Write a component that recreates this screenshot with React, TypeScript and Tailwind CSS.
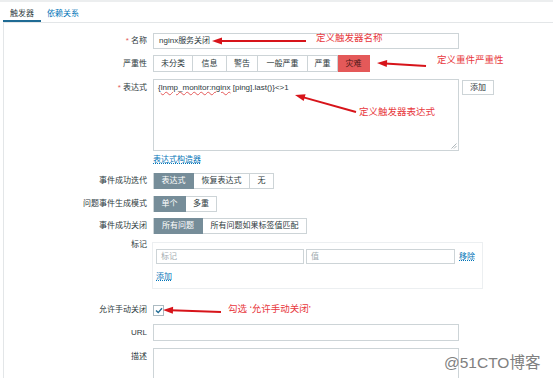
import React from 'react';

const font = "font-['Liberation_Sans','Noto_Sans_CJK_SC',sans-serif]";

function Arrow({x1, y1, x2, y2}: {x1: number; y1: number; x2: number; y2: number}) {
  // tail (x1,y1) -> tip (x2,y2)
  const dx = x2 - x1;
  const dy = y2 - y1;
  const len = Math.hypot(dx, dy);
  const ux = dx / len;
  const uy = dy / len;
  const hl = 10;
  const hw = 3.5;
  const bx = x2 - ux * hl;
  const by = y2 - uy * hl;
  const pts = `${x2},${y2} ${bx - uy * hw},${by + ux * hw} ${bx + uy * hw},${by - ux * hw}`;
  return (
    <g>
      <line x1={x1} y1={y1} x2={bx + ux * 2} y2={by + uy * 2} stroke="#d7141a" strokeWidth={2} />
      <polygon points={pts} fill="#d7141a" />
    </g>
  );
}

function SegGroup({items}: {items: {label: string; w: number; on?: boolean; red?: boolean}[]}) {
  return (
    <div className="flex h-full border-l border-[#cdd4d7]">
      {items.map((it) => (
        <div
          key={it.label}
          style={{width: it.w}}
          className={
            'flex h-full items-center justify-center border-y border-r ' +
            (it.red
              ? 'border-[#e45959] bg-[#e45959] text-[#4a1717]'
              : it.on
                ? 'border-[#768d99] bg-[#768d99] text-white'
                : 'border-[#cdd4d7] bg-white text-[#2e3a40]')
          }
        >
          {it.label}
        </div>
      ))}
    </div>
  );
}

export default function App() {
  const label = 'w-[143px] shrink-0 text-right text-[#2e3a40]';
  return (
    <div className={`relative h-[378px] w-[553px] overflow-hidden bg-white text-[8px] ${font}`}>
      <div className="h-[2px] bg-[#eceeef]" />
      <div className="pl-[3px]">
        {/* tabs */}
        <div className="flex h-[21px] items-end border-b border-[#e3e6e8]">
          <div className="flex h-full flex-col justify-between px-[7px] pt-[7px] text-[#2e3a40]">
            <span className="leading-[10px]">触发器</span>
            <div className="-mx-[7px] h-[2px] bg-[#1f6b94]" />
          </div>
          <div className="ml-[6px] flex h-full pt-[7px] text-[#0275b8]">
            <span className="leading-[10px]">依赖关系</span>
          </div>
        </div>

        {/* body */}
        <div className="h-[360px] border-l border-[#e3e6e8] pt-[10px]">
          {/* 名称 */}
          <div className="flex h-[16px] leading-[16px]">
            <div className={label}>
              <span className="text-[#e45959]">*</span> 名称
            </div>
            <div className="ml-[6px] h-full w-[306px] border border-[#cdd4d7] px-[5px] leading-[14px] text-[#2e3a40]">
              nginx服务关闭
            </div>
          </div>

          {/* 严重性 */}
          <div className="mt-[6px] flex h-[17px] leading-[17px]">
            <div className={label}>严重性</div>
            <div className="ml-[6px] h-full">
              <SegGroup
                items={[
                  {label: '未分类', w: 39},
                  {label: '信息', w: 34},
                  {label: '警告', w: 31},
                  {label: '一般严重', w: 50},
                  {label: '严重', w: 30},
                  {label: '灾难', w: 32, red: true},
                ]}
              />
            </div>
          </div>

          {/* 表达式 */}
          <div className="mt-[7px] flex">
            <div className={label + ' pt-[1px] leading-[16px]'}>
              <span className="text-[#e45959]">*</span> 表达式
            </div>
            <div className="relative ml-[6px] h-[72px] w-[306px] border border-[#cdd4d7] px-[4px] pt-[2px] leading-[12px] text-[#2e3a40]">
              {'{'}
              <span className="underline decoration-[#e45959] decoration-wavy decoration-[0.5px]">lnmp_monitor:nginx</span>
              {' [ping].last()}<>1'}
              <svg className="absolute right-[1px] bottom-[1px]" width="6" height="6" viewBox="0 0 6 6">
                <line x1="0.5" y1="5.5" x2="5.5" y2="0.5" stroke="#9aa5aa" strokeWidth="0.8" />
                <line x1="3" y1="5.5" x2="5.5" y2="3" stroke="#9aa5aa" strokeWidth="0.8" />
              </svg>
            </div>
            <div className="ml-[3px] mt-[1px] flex h-[15px] w-[32px] items-center justify-center border border-[#cdd4d7] text-[#2e3a40]">
              添加
            </div>
          </div>

          {/* 表达式构造器 */}
          <div className="mt-[3px] pl-[149px] leading-[12px]">
            <span className="text-[#0275b8] underline decoration-dotted">表达式构造器</span>
          </div>

          {/* 事件成功迭代 */}
          <div className="mt-[7px] flex h-[16px] leading-[16px]">
            <div className={label}>事件成功迭代</div>
            <div className="ml-[6px] h-full">
              <SegGroup
                items={[
                  {label: '表达式', w: 40, on: true},
                  {label: '恢复表达式', w: 56},
                  {label: '无', w: 24},
                ]}
              />
            </div>
          </div>

          {/* 问题事件生成模式 */}
          <div className="mt-[7px] flex h-[16px] leading-[16px]">
            <div className={label}>问题事件生成模式</div>
            <div className="ml-[6px] h-full">
              <SegGroup
                items={[
                  {label: '单个', w: 32, on: true},
                  {label: '多重', w: 31},
                ]}
              />
            </div>
          </div>

          {/* 事件成功关闭 */}
          <div className="mt-[6px] flex h-[16px] leading-[16px]">
            <div className={label}>事件成功关闭</div>
            <div className="ml-[6px] h-full">
              <SegGroup
                items={[
                  {label: '所有问题', w: 49, on: true},
                  {label: '所有问题如果标签值匹配', w: 104},
                ]}
              />
            </div>
          </div>

          {/* 标记 */}
          <div className="mt-[8px] flex">
            <div className={label + ' -mt-[2px] leading-[10px]'}>标记</div>
            <div className="ml-[5px] w-[331px] border border-[#eceff1] px-[3px] pt-[6px] pb-[5px]">
              <div className="flex h-[15px] items-center">
                <div className="h-full w-[148px] border border-[#cdd4d7] px-[4px] leading-[13px] text-[#a3acb0]">标记</div>
                <div className="ml-[2px] h-full w-[149px] border border-[#cdd4d7] px-[4px] leading-[13px] text-[#a3acb0]">值</div>
                <span className="ml-[4px] text-[#0275b8] underline decoration-dotted">移除</span>
              </div>
              <div className="mt-[7px] leading-[12px]">
                <span className="text-[#0275b8] underline decoration-dotted">添加</span>
              </div>
            </div>
          </div>

          {/* 允许手动关闭 */}
          <div className="mt-[15px] flex h-[12px] items-center leading-[12px]">
            <div className={label}>允许手动关闭</div>
            <div className="ml-[6px] flex h-[11px] w-[11px] items-center justify-center border border-[#acbbc2] bg-white">
              <svg width="8" height="7" viewBox="0 0 8 7">
                <path d="M1 3.5 L3.2 5.6 L7 1.2" fill="none" stroke="#1f6b94" strokeWidth="1.4" />
              </svg>
            </div>
          </div>

          {/* URL */}
          <div className="mt-[8px] flex h-[17px] leading-[17px]">
            <div className={label}>URL</div>
            <div className="ml-[6px] h-full w-[306px] border border-[#cdd4d7]" />
          </div>

          {/* 描述 */}
          <div className="mt-[7px] flex">
            <div className={label + ' pt-[1px] leading-[16px]'}>描述</div>
            <div className="ml-[6px] h-[40px] w-[306px] border border-[#cdd4d7]" />
          </div>
        </div>
      </div>

      {/* annotations */}
      <svg className="pointer-events-none absolute inset-0" width="553" height="378">
        <Arrow x1={306} y1={41} x2={212} y2={41} />
        <Arrow x1={426} y1={66} x2={377} y2={63} />
        <Arrow x1={356} y1={112} x2={295} y2={95} />
        <Arrow x1={221} y1={312} x2={163} y2={310} />
      </svg>
      <div className="absolute left-[316px] top-[32px] text-[9.5px] leading-[12px] text-[#e8383d]">定义触发器名称</div>
      <div className="absolute left-[437px] top-[54px] text-[9.5px] leading-[12px] text-[#e8383d]">定义重件严重性</div>
      <div className="absolute left-[359px] top-[106px] text-[9.5px] leading-[12px] text-[#e8383d]">定义触发器表达式</div>
      <div className="absolute left-[228px] top-[303px] text-[9.5px] leading-[12px] text-[#e8383d]">勾选 ‘允许手动关闭’</div>
      <div className="absolute left-[444px] top-[354px] text-[15.5px] leading-[18px] text-[#808080]">@51CTO博客</div>
    </div>
  );
}
